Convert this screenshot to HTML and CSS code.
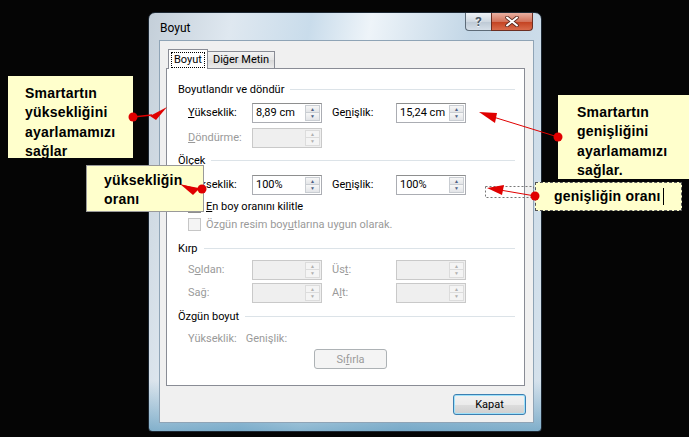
FILE: index.html
```html
<!DOCTYPE html>
<html lang="tr">
<head>
  <meta charset="UTF-8">
  <title>Boyut</title>
  <link rel="stylesheet" href="styles.css">
</head>
<body>
  <div class="desk">
    <div class="window">
      <div class="titlebar">
        <span class="title">Boyut</span>
        <div class="caption">
          <span class="cbtn help">?</span>
          <span class="cbtn close">
            <svg width="14" height="11" viewBox="0 0 14 11"><path d="M2 1.5 L12 9.5 M12 1.5 L2 9.5" stroke="#5a2a20" stroke-width="3.6" stroke-linecap="round"/><path d="M2 1.5 L12 9.5 M12 1.5 L2 9.5" stroke="#fff" stroke-width="2" stroke-linecap="round"/></svg>
          </span>
        </div>
      </div>

      <div class="client">
        <div class="tabs">
          <div class="tab active"><span class="focus">Boyut</span></div>
          <div class="tab">Diğer Metin</div>
        </div>

        <div class="panel">
          <div class="group first">Boyutlandır ve döndür</div>
          <div class="row">
            <span class="lbl"><u>Y</u>ükseklik:</span>
            <span class="spin"><span class="val">8,89 cm</span><span class="arrows"><i>▲</i><i>▼</i></span></span>
            <span class="lbl second">Ge<u>n</u>işlik:</span>
            <span class="spin"><span class="val">15,24 cm</span><span class="arrows"><i>▲</i><i>▼</i></span></span>
          </div>
          <div class="row">
            <span class="lbl off"><u>D</u>öndürme:</span>
            <span class="spin off"><span class="val"></span><span class="arrows"><i>▲</i><i>▼</i></span></span>
          </div>

          <div class="group">Ölçek</div>
          <div class="row scale">
            <span class="lbl">Yü<u>k</u>seklik:</span>
            <span class="spin"><span class="val">100%</span><span class="arrows"><i>▲</i><i>▼</i></span></span>
            <span class="lbl second">Ge<u>n</u>işlik:</span>
            <span class="spin"><span class="val">100%</span><span class="arrows"><i>▲</i><i>▼</i></span></span>
          </div>
          <div class="check"><span class="box"></span><u>E</u>n boy oranını kilitle</div>
          <div class="check off"><span class="box"></span>Özgün resim boy<u>u</u>tlarına uygun olarak.</div>

          <div class="group crop">Kırp</div>
          <div class="row short">
            <span class="lbl off">S<u>o</u>ldan:</span>
            <span class="spin off"><span class="val"></span><span class="arrows"><i>▲</i><i>▼</i></span></span>
            <span class="lbl second off">Üs<u>t</u>:</span>
            <span class="spin off"><span class="val"></span><span class="arrows"><i>▲</i><i>▼</i></span></span>
          </div>
          <div class="row short">
            <span class="lbl off">Sa<u>ğ</u>:</span>
            <span class="spin off"><span class="val"></span><span class="arrows"><i>▲</i><i>▼</i></span></span>
            <span class="lbl second off">A<u>l</u>t:</span>
            <span class="spin off"><span class="val"></span><span class="arrows"><i>▲</i><i>▼</i></span></span>
          </div>

          <div class="group orig">Özgün boyut</div>
          <div class="row text off">
            <span>Yükseklik:</span><span class="gap">Genişlik:</span>
          </div>
          <div class="reset"><span class="btn off">Sı<u>f</u>ırla</span></div>
        </div>

        <div class="footer"><span class="btn def">Kapat</span></div>
      </div>
    </div>

    <!-- açıklama kutuları -->
    <div class="note n1">Smartartın yüksekliğini ayarlamamızı sağlar</div>
    <div class="note n2">yüksekliğin oranı</div>
    <div class="note n3">Smartartın genişliğini ayarlamamızı sağlar.</div>
    <div class="note n4">genişliğin oranı<span class="caret"></span></div>

    <svg class="arrows-layer" width="689" height="437" viewBox="0 0 689 437">
      <g fill="#e00000" stroke="#e00000">
        <line x1="133" y1="117" x2="152" y2="115" stroke-width="1.5"/>
        <polygon points="150,116 167,107 156,120" stroke="none"/>
        <circle cx="133" cy="117" r="4.5" stroke="none"/>

        <line x1="200" y1="189" x2="184" y2="186" stroke-width="1.5"/>
        <polygon points="180,184 199,189 193,195" stroke="none"/>
        <circle cx="202" cy="189" r="4.5" stroke="none"/>

        <line x1="558" y1="137" x2="490" y2="116" stroke-width="1"/>
        <polygon points="479,112 497,113 495,123" stroke="none"/>
        <circle cx="558" cy="137" r="4.5" stroke="none"/>

        <rect x="485.5" y="186.5" width="48" height="11" fill="none" stroke="#777" stroke-dasharray="2 2"/>
        <line x1="535" y1="196" x2="500" y2="190" stroke-width="1"/>
        <polygon points="487,188 504,185 502,195" stroke="none"/>
        <circle cx="535" cy="196" r="4.5" stroke="none"/>
      </g>
    </svg>
  </div>
</body>
</html>
```

FILE: styles.css
```css
body { margin: 0; background: #050505; font-family: Roboto, "Open Sans", sans-serif; font-size: 11px; color: #000; }
.desk { position: relative; width: 689px; height: 437px; padding: 12px 0 0 148px; box-sizing: border-box; overflow: hidden; }

/* pencere çerçevesi */
.window { width: 394px; height: 420px; box-sizing: border-box; display: flex; flex-direction: column; padding: 0 7px 8px 10px;
  border: 1px solid #1d2833; border-radius: 7px 7px 4px 4px;
  background: linear-gradient(to bottom, rgba(255,255,255,0) 88%, rgba(70,140,180,.6) 100%),
    linear-gradient(100deg, #c4cfd9 0%, #dfe8f0 18%, #c9dceb 35%, #eef4f9 48%, #c2d6e6 70%, #d6e2ec 100%); }
.titlebar { height: 27px; display: flex; justify-content: space-between; flex-shrink: 0; }
.title { padding: 8px 0 0 1px; line-height: 14px; font-size: 12px; color: #000; }
.caption { display: flex; margin-right: 1px; height: 18px; }
.cbtn { display: flex; align-items: center; justify-content: center; height: 18px; box-sizing: border-box; border: 1px solid #5d6b78; border-top: none; }
.help { width: 26px; border-radius: 0 0 0 4px; border-right: none; font-weight: bold; font-size: 13px; color: #4a5866;
  background: linear-gradient(#eef2f6, #cfd8e1 50%, #bcc8d4 51%, #d6dfe8); text-shadow: 0 1px 0 #fff; }
.close { width: 42px; border-radius: 0 0 4px 0; border-color: #6b2e22;
  background: linear-gradient(#e9b0a2, #d3735b 50%, #c2401f 51%, #d96b4b); }

.client { flex: 1; border: 1px solid #8fa4b6; background: #f0f0f0; padding: 8px 8px 0 6px; display: flex; flex-direction: column; }

/* sekmeler */
.tabs { display: flex; align-items: flex-end; height: 19px; padding-left: 2px; }
.tab { height: 17px; box-sizing: border-box; border: 1px solid #898c95; border-bottom: none; border-left: none; padding: 0 5px; line-height: 15px;
  background: linear-gradient(#f3f3f3, #e4e4e4 50%, #d9d9d9 51%, #ececec); }
.tab.active { height: 20px; margin-bottom: -1px; border-left: 1px solid #898c95; background: #fff; position: relative; z-index: 1; padding: 2px 2px 0; }
.focus { display: block; border: 1px dotted #000; padding: 0 2px; line-height: 14px; }

.panel { height: 318px; box-sizing: border-box; border: 1px solid #898c95; background: #fff; padding: 0 9px 0 11px; }

.group { display: flex; align-items: center; height: 20px; white-space: nowrap; }
.group::after { content: ""; flex: 1; height: 1px; background: #dce3e8; margin-left: 6px; }
.group.first { margin-top: 10px; height: 21px; }
.group.crop { margin-top: 4px; }
.group.orig { margin-top: 2px; }

.row { display: flex; align-items: center; height: 25px; padding-left: 10px; }
.row.scale { margin-top: 2px; }
.row.short { height: 23px; }
.lbl { width: 64px; }
.lbl.second { margin-left: 10px; }
.off { color: #9a9a9a; }

.spin { display: flex; width: 70px; height: 20px; box-sizing: border-box; border: 1px solid #abadb3; border-top-color: #8e8f8f; background: #fff; color: #000; white-space: nowrap; }
.spin .val { flex: 1; padding-left: 3px; line-height: 18px; }
.spin .arrows { width: 15px; display: flex; flex-direction: column; margin: 1px 1px 1px 0; }
.spin .arrows i { flex: 1; display: flex; align-items: center; justify-content: center; font-style: normal; font-size: 5px; color: #4d6185;
  border: 1px solid #c9cdd2; background: linear-gradient(#f7f7f7, #e3e5e8); }
.spin .arrows i + i { border-top: none; }
.spin.off { background: #efefef; border-color: #c9c9c9; }
.spin.off .arrows i { color: #b0b0b0; border-color: #dcdcdc; background: #f4f4f4; }

.check { display: flex; align-items: center; height: 18px; padding-left: 10px; }
.check.off { height: 19px; }
.box { width: 13px; height: 13px; box-sizing: border-box; border: 1px solid #8f8f8f; background: #f4f4f4; margin-right: 5px; }
.check.off .box { border-color: #c6c6c6; }

.row.text { height: 22px; margin-top: 1px; }
.gap { margin-left: 9px; }

.reset { display: flex; padding-left: 136px; }
.btn { display: flex; align-items: center; justify-content: center; width: 73px; height: 21px; box-sizing: border-box; border-radius: 3px;
  border: 1px solid #707070; background: linear-gradient(#f2f2f2, #ebebeb 50%, #dddddd 51%, #cfcfcf); }
.btn.off { border-color: #adb2b5; background: #f4f4f4; height: 20px; }
.btn.def { border-color: #3c7fb1; box-shadow: inset 0 0 0 1px #9ee1fa; }
.footer { display: flex; justify-content: flex-end; margin: 8px -1px 0 0; }

/* açıklama kutuları */
.note { position: absolute; background: #ffffcc; font-family: "Liberation Sans", Arial, sans-serif; font-weight: bold; font-size: 14px; color: #000; box-sizing: border-box; letter-spacing: 0.2px; }
.n1 { left: 8px; top: 76px; width: 125px; height: 82px; padding: 8px 0 0 17px; line-height: 19.4px; }
.n2 { left: 86px; top: 165px; width: 118px; height: 47px; padding: 5px 0 0 17px; line-height: 18.5px; border: 1px solid #9a9a9a; }
.n3 { left: 558px; top: 95px; width: 140px; height: 84px; padding: 8px 0 0 19px; line-height: 19.4px; }
.n4 { left: 535px; top: 182px; width: 147px; height: 29px; padding: 0 0 0 18px; line-height: 27px; border: 1px dashed #555; display: flex; align-items: center; }
.caret { display: inline-block; width: 1px; height: 17px; background: #000; margin-left: 2px; }

.arrows-layer { position: absolute; left: 0; top: 0; pointer-events: none; }
```
